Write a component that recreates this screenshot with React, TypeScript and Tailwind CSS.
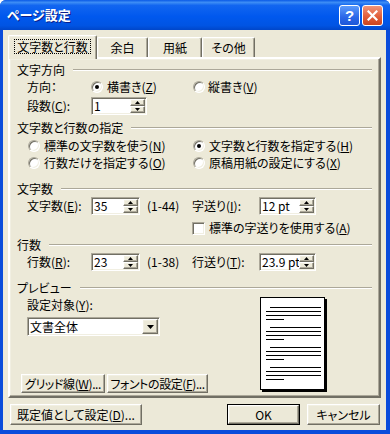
import React from 'react'

// classic 3D edges (XP colours)
const raised =
  'border border-t-white border-l-white border-r-[#716F64] border-b-[#716F64] shadow-[inset_-1px_-1px_0_#ACA899,inset_1px_1px_0_#F1EFE2]'
const sunken =
  'border border-t-[#ACA899] border-l-[#ACA899] border-r-white border-b-white shadow-[inset_1px_1px_0_#716F64,inset_-1px_-1px_0_#F1EFE2]'

const Radio: React.FC<{ on?: boolean }> = ({ on }) => (
  <span
    className={`flex items-center justify-center w-[12px] h-[12px] shrink-0 rounded-full bg-white ${sunken}`}
  >
    {on && <span className="w-[4px] h-[4px] rounded-full bg-black" />}
  </span>
)

const Check: React.FC = () => <span className={`w-[13px] h-[13px] shrink-0 bg-white ${sunken}`} />

const Arrow: React.FC<{ up?: boolean }> = ({ up }) => (
  <svg width="5" height="3" viewBox="0 0 5 3">
    {up ? <path d="M2.5 0L5 3H0z" fill="#000" /> : <path d="M0 0h5L2.5 3z" fill="#000" />}
  </svg>
)

const Spin: React.FC<{ value: string; className: string }> = ({ value, className }) => (
  <div className={`flex h-[18px] bg-white ${sunken} ${className}`}>
    <span className="flex-1 pl-[2px] leading-[16px] whitespace-nowrap overflow-hidden">{value}</span>
    <div className="flex flex-col w-[15px] my-[1px] mr-[1px]">
      <span className={`flex-1 flex items-center justify-center bg-[#ECE9D8] ${raised}`}>
        <Arrow up />
      </span>
      <span className={`flex-1 flex items-center justify-center bg-[#ECE9D8] ${raised}`}>
        <Arrow />
      </span>
    </div>
  </div>
)

const Btn: React.FC<{ className: string; children: React.ReactNode }> = ({ className, children }) => (
  <div className={`flex items-center justify-center bg-[#ECE9D8] leading-[14px] whitespace-nowrap ${raised} ${className}`}>
    <span>{children}</span>
  </div>
)

const GroupHead: React.FC<{ title: string; className: string }> = ({ title, className }) => (
  <div className={`flex items-center pl-[7px] pr-[7px] ${className}`}>
    <span className="leading-[14px]">{title}</span>
    <span className="flex-1 ml-[8px] h-[2px] border-t border-t-[#ACA899] border-b border-b-white" />
  </div>
)

const Page: React.FC = () => {
  const groups = [10, 30, 50, 70]
  return (
    <svg width="67" height="95" viewBox="0 0 67 95" className="mt-[1px]">
      <rect x="2" y="2" width="65" height="93" fill="#000" />
      <rect x="0.5" y="0.5" width="64" height="92" fill="#fff" stroke="#000" />
      {groups.map((y) => (
        <g key={y} fill="#000">
          <rect x="10" y={y} width="51" height="1" />
          <rect x="6" y={y + 4} width="55" height="1" />
          <rect x="6" y={y + 8} width="55" height="1" />
          <rect x="6" y={y + 12} width="18" height="1" />
        </g>
      ))}
    </svg>
  )
}

export default function App() {
  return (
    <div className="w-[390px] h-[434px] flex flex-col bg-[#0A4CDB] rounded-t-[6px] overflow-hidden text-[12px] text-black [font-family:'Noto_Sans_CJK_JP',sans-serif] [font-feature-settings:'palt']">
      {/* title bar */}
      <div className="h-[30px] shrink-0 flex items-center pl-[7px] pr-[7px] bg-[linear-gradient(180deg,#0A5AE6_0%,#3D8DF5_8%,#1266F0_18%,#0058EE_55%,#0054E3_85%,#0046C9_100%)]">
        <span className="flex-1 text-white font-bold text-[13px] leading-[16px] [text-shadow:1px_1px_0_#0A1E8C]">ページ設定</span>
        <div className="flex gap-[2px] mt-[1px]">
          <span className="w-[21px] h-[21px] flex items-center justify-center rounded-[3px] border border-white bg-[linear-gradient(180deg,#5C9BFB,#2A66E8_60%,#1D57D8)] text-white font-bold text-[15px] leading-none [font-family:'Liberation_Sans',sans-serif]">
            ?
          </span>
          <span className="w-[21px] h-[21px] flex items-center justify-center rounded-[3px] border border-white bg-[linear-gradient(180deg,#F0957A,#E25F3B_55%,#C9441F)]">
            <svg width="11" height="11" viewBox="0 0 11 11">
              <path d="M1.5 1.5l8 8M9.5 1.5l-8 8" stroke="#fff" strokeWidth="2.2" strokeLinecap="square" />
            </svg>
          </span>
        </div>
      </div>

      {/* client area */}
      <div className="flex-1 ml-[3px] mr-[4px] mb-[4px] bg-[#ECE9D8] flex flex-col">
        {/* tabs */}
        <div className="mt-[5px] ml-[5px] h-[22px] flex items-end">
          <div className="relative z-10 w-[89px] h-[24px] -mb-[2px] flex justify-center pt-[3px] bg-[#ECE9D8] rounded-t-[2px] border-t border-l border-r border-t-white border-l-white border-r-[#716F64] shadow-[inset_-1px_0_0_#ACA899,inset_1px_1px_0_#F1EFE2]">
            <span className="h-[15px] px-[2px] border border-dotted border-black leading-[13px]">文字数と行数</span>
          </div>
          <div className="w-[51px] h-[20px] flex justify-center pt-[3px] rounded-t-[2px] border-t border-l border-r border-t-white border-l-white border-r-[#716F64] shadow-[inset_-1px_0_0_#ACA899,inset_1px_1px_0_#F1EFE2] leading-[14px]">
            余白
          </div>
          <div className="w-[54px] h-[20px] flex justify-center pt-[3px] rounded-t-[2px] border-t border-l border-r border-t-white border-l-white border-r-[#716F64] shadow-[inset_-1px_0_0_#ACA899,inset_1px_1px_0_#F1EFE2] leading-[14px]">
            用紙
          </div>
          <div className="w-[53px] h-[20px] flex justify-center pt-[3px] rounded-t-[2px] border-t border-l border-r border-t-white border-l-white border-r-[#716F64] shadow-[inset_-1px_0_0_#ACA899,inset_1px_1px_0_#F1EFE2] leading-[14px]">
            その他
          </div>
        </div>

        {/* tab page */}
        <div className="ml-[5px] mr-[5px] h-[341px] flex flex-col pt-[2px] border-2 border-t-white border-l-white border-r-[#716F64] border-b-[#716F64] shadow-[inset_-1px_-1px_0_#ACA899,inset_1px_1px_0_#F1EFE2]">
          <GroupHead title="文字方向" className="h-[18px]" />
          <div className="h-[16px] flex items-center pl-[17px] leading-[14px]">
            <span className="w-[64px]">方向：</span>
            <span className="w-[102px] flex items-center gap-[4px]">
              <Radio on />
              <span>
                横書き(<u>Z</u>)
              </span>
            </span>
            <span className="flex items-center gap-[3px]">
              <Radio />
              <span>
                縦書き(<u>V</u>)
              </span>
            </span>
          </div>
          <div className="mt-[2px] h-[18px] flex items-center pl-[17px] leading-[14px]">
            <span className="w-[64px]">
              段数(<u>C</u>):
            </span>
            <Spin value="1" className="w-[56px]" />
          </div>

          <GroupHead title="文字数と行数の指定" className="mt-[4px] h-[18px]" />
          <div className="h-[18px] flex items-center pl-[18px] leading-[14px]">
            <span className="w-[165px] flex items-center gap-[4px]">
              <Radio />
              <span>
                標準の文字数を使う(<u>N</u>)
              </span>
            </span>
            <span className="flex items-center gap-[4px]">
              <Radio on />
              <span>
                文字数と行数を指定する(<u>H</u>)
              </span>
            </span>
          </div>
          <div className="h-[16px] flex items-center pl-[18px] leading-[14px]">
            <span className="w-[165px] flex items-center gap-[4px]">
              <Radio />
              <span>
                行数だけを指定する(<u>O</u>)
              </span>
            </span>
            <span className="flex items-center gap-[4px]">
              <Radio />
              <span>
                原稿用紙の設定にする(<u>X</u>)
              </span>
            </span>
          </div>

          <GroupHead title="文字数" className="mt-[10px] h-[16px]" />
          <div className="h-[18px] flex items-center pl-[17px] leading-[14px]">
            <span className="w-[64px]">
              文字数(<u>E</u>):
            </span>
            <Spin value="35" className="w-[49px]" />
            <span className="ml-[7px] w-[45px]">(1-44)</span>
            <span className="w-[67px]">
              字送り(<u>I</u>):
            </span>
            <Spin value="12 pt" className="w-[57px]" />
          </div>
          <div className="mt-[4px] h-[18px] flex items-center pl-[182px] gap-[4px] leading-[14px]">
            <Check />
            <span>
              標準の字送りを使用する(<u>A</u>)
            </span>
          </div>

          <GroupHead title="行数" className="h-[16px]" />
          <div className="h-[17px] flex items-center pl-[17px] leading-[14px]">
            <span className="w-[64px]">
              行数(<u>R</u>):
            </span>
            <Spin value="23" className="w-[49px]" />
            <span className="ml-[7px] w-[45px]">(1-38)</span>
            <span className="w-[67px]">
              行送り(<u>T</u>):
            </span>
            <Spin value="23.9 pt" className="w-[57px]" />
          </div>

          <GroupHead title="プレビュー" className="mt-[10px] h-[16px]" />
          <div className="h-[98px] flex">
            <div className="w-[250px] flex flex-col">
              <span className="mt-[2px] h-[14px] pl-[17px] leading-[14px]">
                設定対象(<u>Y</u>):
              </span>
              <div className={`mt-[5px] ml-[17px] w-[133px] h-[19px] flex bg-white ${sunken}`}>
                <span className="flex-1 pl-[2px] leading-[17px]">文書全体</span>
                <span className={`w-[16px] my-[1px] mr-[1px] flex items-center justify-center bg-[#ECE9D8] ${raised}`}>
                  <svg width="7" height="4" viewBox="0 0 7 4">
                    <path d="M0 0h7L3.5 4z" fill="#000" />
                  </svg>
                </span>
              </div>
              <div className="mt-[38px] ml-[11px] flex gap-[2px] tracking-[-0.4px]">
                <Btn className="w-[84px] h-[19px]">
                  グリッド線(<u>W</u>)...
                </Btn>
                <Btn className="w-[101px] h-[19px]">
                  フォントの設定(<u>F</u>)...
                </Btn>
              </div>
            </div>
            <Page />
          </div>
        </div>

        {/* bottom buttons */}
        <div className="mt-[6px] ml-[7px] mr-[6px] flex justify-between">
          <Btn className="w-[132px] h-[21px]">
            既定値として設定(<u>D</u>)...
          </Btn>
          <div className="flex gap-[7px]">
            <div className="w-[73px] h-[21px] border border-black flex">
              <Btn className="flex-1">OK</Btn>
            </div>
            <Btn className="w-[73px] h-[21px]">キャンセル</Btn>
          </div>
        </div>
      </div>
    </div>
  )
}
